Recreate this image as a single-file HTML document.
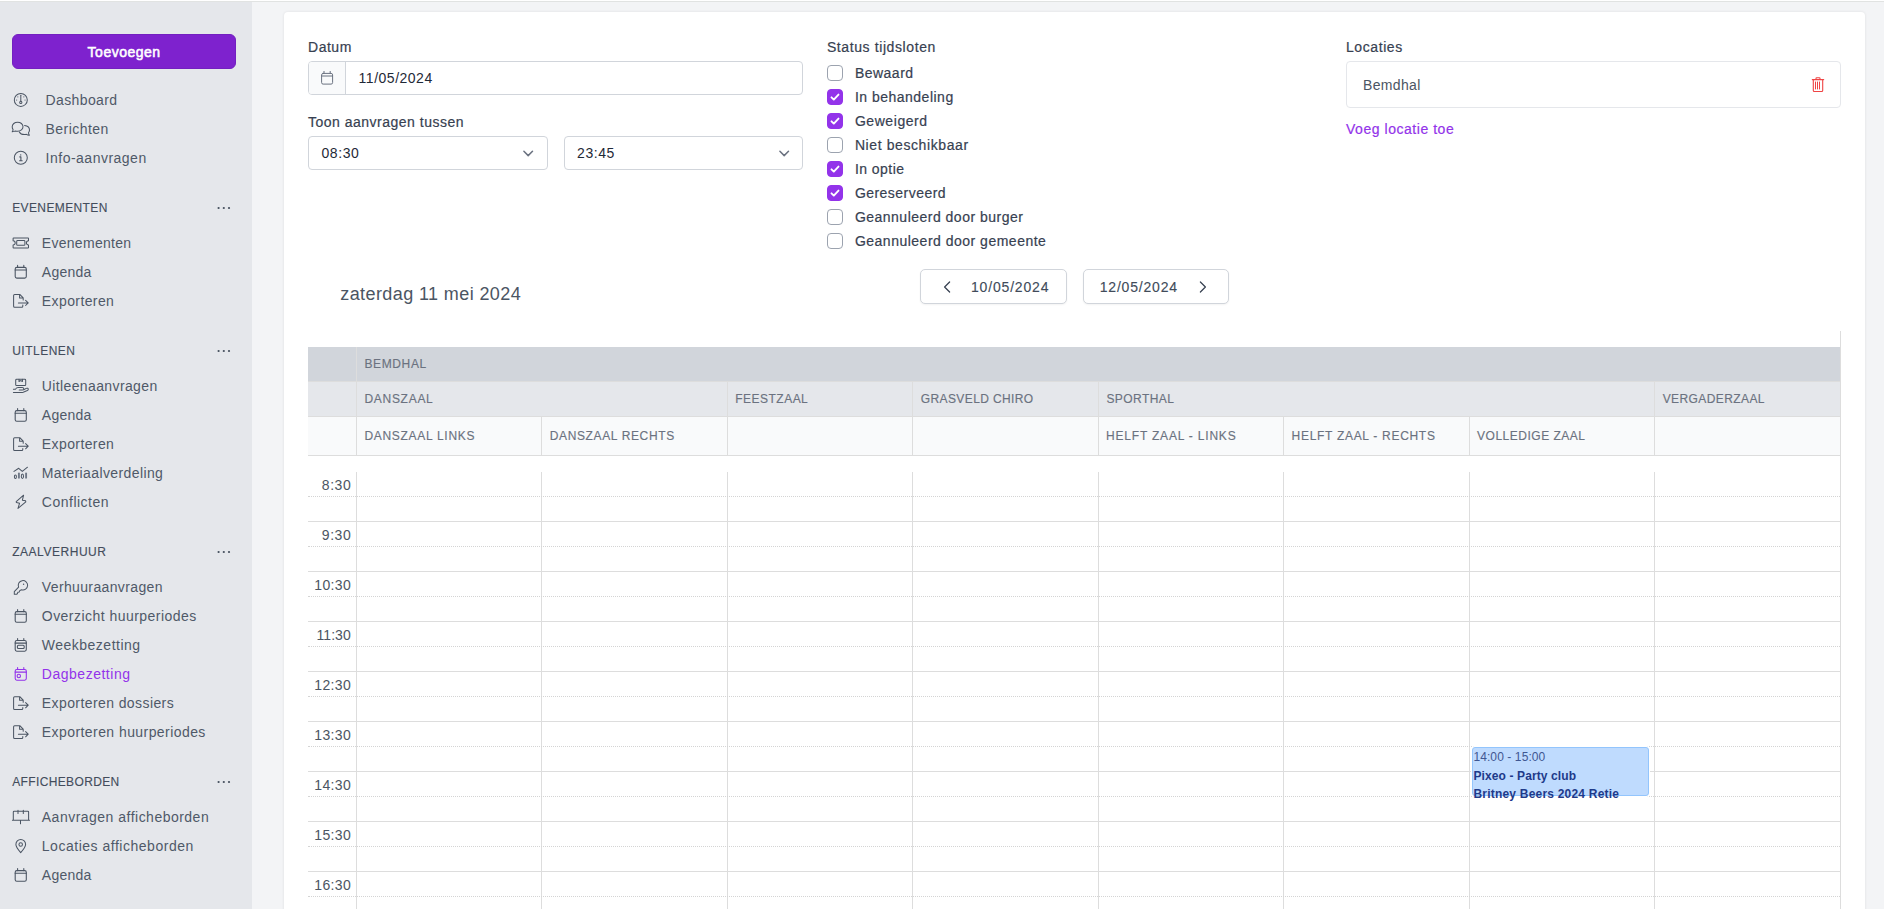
<!DOCTYPE html>
<html lang="nl">
<head>
<meta charset="utf-8">
<title>Dagbezetting</title>
<style>
*{box-sizing:border-box;margin:0;padding:0}
html,body{width:1884px;height:909px;overflow:hidden}
body{position:relative;background:#f3f4f6;font-family:"Liberation Sans",sans-serif;font-size:14px;color:#374151}
.abs,.t{position:absolute}
.t{white-space:nowrap;line-height:1;font-weight:400;text-decoration:none;display:block}
h2.t,h3.t{font-weight:400}
.med{-webkit-text-stroke:0.2px currentColor}
.hd{-webkit-text-stroke:0.12px currentColor}
.hd2{-webkit-text-stroke:0.15px currentColor}
.semi{-webkit-text-stroke:0.55px currentColor}
#topline{left:0;top:0;width:1884px;height:2px;background:#e1e3e2;border-top:1px solid #fff;z-index:5}
#sidebar{left:0;top:0;width:252px;height:909px;background:#e5e7eb}
#addbtn{left:12px;top:34px;width:224px;height:35px;border-radius:6px;background:#7e22ce;border:1px solid #7320c0;font-family:inherit;text-align:left;overflow:visible}
#card{left:284px;top:12px;width:1581px;height:920px;background:#fff;border-radius:4px;box-shadow:0 0 3px rgba(0,0,0,.09)}
.box{border:1px solid #d1d5db;border-radius:4px;background:#fff}
.cb{width:16px;height:16px;left:827px;border:1px solid #9ca3af;border-radius:4px;background:#fff}
.cb.on{background:#9333ea;border-color:#9333ea}
.navb{border:1px solid #d1d5db;border-radius:5px;background:#fff;box-shadow:0 1px 2px rgba(0,0,0,.05)}
.vl{width:1px;background:#ddd}
.hl{height:1px;background:#ddd;left:308px;width:1532px}
.dl{height:0;border-top:1px dotted #d4d4d4;left:308px;width:1532px}
svg{position:absolute;overflow:visible}
</style>
</head>
<body>
<div id="topline" class="abs"></div>
<aside id="sidebar" class="abs">
<button id="addbtn" class="abs" type="button"><span class="t semi" id="t0" style="left:74.60px;top:10.15px;font-size:14px;color:#ffffff;letter-spacing:0.498px;">Toevoegen</span></button>
<nav>
<svg id="navicons" width="252" height="909" viewBox="0 0 252 909" style="left:0;top:0"><g fill="none" stroke="#4b5563" stroke-width="1.02" stroke-linecap="round" stroke-linejoin="round"><circle cx="20.8" cy="99.90" r="6.5"/><path d="M20.8 95.30V101.30"/><circle cx="20.8" cy="102.40" r="1.1"/><path d="M16.6 100.10h.1M25 100.10h.1M17.8 96.90h.1M23.8 96.90h.1" stroke-width="1"/></g><g fill="none" stroke="#4b5563" stroke-width="1.02" stroke-linecap="round" stroke-linejoin="round" transform="translate(6,114)"><path d="M7.9 17.4c-.9.4-1.6.5-1.7.4.6-.8.9-1.6.9-2.2A4.6 4.6 0 0 1 6.2 12.7c0-2.5 2.4-4.5 5.4-4.5s5.4 2 5.4 4.5-2.4 4.5-5.4 4.5c-1.4 0-2.600-.3-3.700.2z"/><path d="M18.600 11.500c2.800.3 4.900 2.200 4.900 4.600 0 1-.4 1.900-1 2.700 0 .6.300 1.600.9 2.400-.900.100-2.100-.300-3-.900-.6.200-1.300.300-2 .300-2.300 0-4.300-1.100-5.100-2.700"/></g><g fill="none" stroke="#4b5563" stroke-width="1.02" stroke-linecap="round" stroke-linejoin="round"><circle cx="20.8" cy="157.80" r="6.5"/><path d="M19.8 156.90h1.1v3.700M19.600 160.70h2.600" stroke-width="1.1"/><circle cx="20.700" cy="154.90" r=".7" fill="#4b5563" stroke="none"/></g><g fill="none" stroke="#4b5563" stroke-width="1.02" stroke-linecap="round" stroke-linejoin="round"><path d="M13.600 237.90H28a.5.5 0 0 1 .5.5v2.400a2 2 0 0 0 0 4.200v2.400a.5.5 0 0 1-.5.5H13.600a.5.5 0 0 1-.5-.5v-2.400a2 2 0 0 0 0-4.200v-2.400a.5.5 0 0 1 .5-.5z"/><rect x="16.700" y="240.60" width="8.200" height="4.600" rx=".8"/></g><g fill="none" stroke="#4b5563" stroke-width="1.08" stroke-linecap="round" stroke-linejoin="round"><rect x="15.2" y="267.40" width="11.1" height="10.7" rx="1.6"/><path d="M15.2 270.00H26.3M17.6 267.40v-2M23.8 267.40v-2"/></g><g fill="none" stroke="#4b5563" stroke-width="1.02" stroke-linecap="round" stroke-linejoin="round"><path d="M22.800 305.10v1.100a1 1 0 0 1-1 1H14.6a1 1 0 0 1-1-1V295.40a1 1 0 0 1 1-1h5.2l3.4 3.4v2.2M19.6 294.40v3.6h3.6"/><path d="M18.4 302.90H28.2M25.6 300.30l2.6 2.6-2.6 2.6"/></g><g fill="none" stroke="#4b5563" stroke-width="1.02" stroke-linecap="round" stroke-linejoin="round"><rect x="15.700" y="379.30" width="10" height="6.300" rx=".9"/><path d="M19 379.30v2.200l1.700-.9 1.700.9v-2.200"/><path d="M13.400 389.30h2c.7-1 1.600-1.700 2.800-1.700h4c1 0 1.600.6 1.600 1.300s-.6 1.100-1.400 1.100h-3.200M23.800 389.70l2.400-1.300c1-.5 2.100 0 2.100.9 0 .5-.3.9-.9 1.200l-4.2 1.7c-.6.2-1 .3-1.6.3H13.4"/></g><g fill="none" stroke="#4b5563" stroke-width="1.08" stroke-linecap="round" stroke-linejoin="round"><rect x="15.2" y="410.60" width="11.1" height="10.7" rx="1.6"/><path d="M15.2 413.20H26.3M17.6 410.60v-2M23.8 410.60v-2"/></g><g fill="none" stroke="#4b5563" stroke-width="1.02" stroke-linecap="round" stroke-linejoin="round"><path d="M22.800 448.40v1.100a1 1 0 0 1-1 1H14.6a1 1 0 0 1-1-1V438.70a1 1 0 0 1 1-1h5.2l3.4 3.4v2.2M19.6 437.70v3.6h3.6"/><path d="M18.4 446.20H28.2M25.6 443.60l2.6 2.6-2.6 2.6"/></g><g fill="none" stroke="#4b5563" stroke-width="1.02" stroke-linecap="round" stroke-linejoin="round" transform="translate(0,-0.10)"><path d="M14 471.500l4.700-3.100 3.600 3.100 5.200-4.200"/><ellipse cx="15.400" cy="476.800" rx="1" ry="1.800"/><path d="M18.900 472.800v5.800" stroke-width="1.900" stroke-linecap="butt" stroke="#6f7887"/><ellipse cx="22.400" cy="476.400" rx="1.100" ry="2.200"/><path d="M26.100 472.800v5.800" stroke-width="1.900" stroke-linecap="butt" stroke="#6f7887"/></g><g fill="none" stroke="#4b5563" stroke-width="1.02" stroke-linecap="round" stroke-linejoin="round"><path d="M23.600 495.200l-7.400 6.400.2 1 3.200.6-1.600 5.200 7.800-6.600-.2-1-3.200-.6z"/></g><g fill="none" stroke="#4b5563" stroke-width="1.02" stroke-linecap="round" stroke-linejoin="round" transform="translate(6,572.500)"><path d="M12.600 14.600a4.700 4.700 0 1 1 3 2.700l-1.700.6-.6 1.500-1.500.4-.5 1.500-.8.500H8.300v-2.700z"/><circle cx="17.600" cy="11.700" r=".7" fill="#4b5563" stroke="none"/></g><g fill="none" stroke="#4b5563" stroke-width="1.08" stroke-linecap="round" stroke-linejoin="round"><rect x="15.2" y="611.60" width="11.1" height="10.7" rx="1.6"/><path d="M15.2 614.20H26.3M17.6 611.60v-2M23.8 611.60v-2"/></g><g fill="none" stroke="#4b5563" stroke-width="1.08" stroke-linecap="round" stroke-linejoin="round"><rect x="15.2" y="640.50" width="11.1" height="10.7" rx="1.6"/><path d="M15.2 643.10H26.3M17.6 640.50v-2M23.8 640.50v-2"/><rect x="17.4" y="645.30" width="6.8" height="3.2" rx="1"/></g><g fill="none" stroke="#9333ea" stroke-width="1.08" stroke-linecap="round" stroke-linejoin="round"><rect x="15.2" y="669.50" width="11.1" height="10.7" rx="1.6"/><path d="M15.2 672.10H26.3M17.6 669.50v-2M23.8 669.50v-2"/><circle cx="18.8" cy="676.00" r="1.7"/></g><g fill="none" stroke="#4b5563" stroke-width="1.02" stroke-linecap="round" stroke-linejoin="round"><path d="M22.800 707.40v1.100a1 1 0 0 1-1 1H14.6a1 1 0 0 1-1-1V697.70a1 1 0 0 1 1-1h5.2l3.4 3.4v2.2M19.6 696.70v3.6h3.6"/><path d="M18.4 705.20H28.2M25.6 702.60l2.6 2.6-2.6 2.6"/></g><g fill="none" stroke="#4b5563" stroke-width="1.02" stroke-linecap="round" stroke-linejoin="round"><path d="M22.800 736.40v1.100a1 1 0 0 1-1 1H14.6a1 1 0 0 1-1-1V726.70a1 1 0 0 1 1-1h5.2l3.4 3.4v2.2M19.6 725.70v3.6h3.6"/><path d="M18.4 734.20H28.2M25.6 731.60l2.6 2.6-2.6 2.6"/></g><g fill="none" stroke="#4b5563" stroke-width="1.02" stroke-linecap="round" stroke-linejoin="round"><path d="M13.300 820.200V812a.8.8 0 0 1 .8-.8H27.800a.8.8 0 0 1 .8.8v8.200M12.400 820.200H29.500M20.500 820.200v3.500M18 810.200v3.300M23.300 810.200v3.300"/></g><g fill="none" stroke="#4b5563" stroke-width="1.02" stroke-linecap="round" stroke-linejoin="round" transform="translate(6,831)"><path d="M14.700 21.600c-3-3.600-4.800-5.700-4.800-8.200a4.850 4.850 0 0 1 9.700 0c0 2.500-1.800 4.600-4.900 8.200z"/><circle cx="14.700" cy="13.400" r="1.750"/></g><g fill="none" stroke="#4b5563" stroke-width="1.08" stroke-linecap="round" stroke-linejoin="round"><rect x="15.2" y="870.60" width="11.1" height="10.7" rx="1.6"/><path d="M15.2 873.20H26.3M17.6 870.60v-2M23.8 870.60v-2"/></g></svg>
<svg width="14" height="4" viewBox="0 0 14 4" style="left:217.000px;top:205.9px"><circle cx="1.600" cy="2" r="1.100" fill="#434d5c"/><circle cx="6.800" cy="2" r="1.100" fill="#434d5c"/><circle cx="12" cy="2" r="1.100" fill="#434d5c"/></svg><svg width="14" height="4" viewBox="0 0 14 4" style="left:217.000px;top:348.9px"><circle cx="1.600" cy="2" r="1.100" fill="#434d5c"/><circle cx="6.800" cy="2" r="1.100" fill="#434d5c"/><circle cx="12" cy="2" r="1.100" fill="#434d5c"/></svg><svg width="14" height="4" viewBox="0 0 14 4" style="left:217.000px;top:549.7px"><circle cx="1.600" cy="2" r="1.100" fill="#434d5c"/><circle cx="6.800" cy="2" r="1.100" fill="#434d5c"/><circle cx="12" cy="2" r="1.100" fill="#434d5c"/></svg><svg width="14" height="4" viewBox="0 0 14 4" style="left:217.000px;top:779.7px"><circle cx="1.600" cy="2" r="1.100" fill="#434d5c"/><circle cx="6.800" cy="2" r="1.100" fill="#434d5c"/><circle cx="12" cy="2" r="1.100" fill="#434d5c"/></svg>
<a class="t" id="t1" style="left:45.60px;top:92.90px;font-size:14px;color:#4f5968;letter-spacing:0.375px;">Dashboard</a>
<a class="t" id="t2" style="left:45.60px;top:121.90px;font-size:14px;color:#4f5968;letter-spacing:0.443px;">Berichten</a>
<a class="t" id="t3" style="left:45.60px;top:150.90px;font-size:14px;color:#4f5968;letter-spacing:0.493px;">Info-aanvragen</a>
<h3 class="t hd" id="t4" style="left:12.20px;top:202.04px;font-size:12px;color:#434d5c;letter-spacing:0.384px;">EVENEMENTEN</h3>
<a class="t" id="t5" style="left:41.80px;top:235.75px;font-size:14px;color:#4f5968;letter-spacing:0.289px;">Evenementen</a>
<a class="t" id="t6" style="left:41.80px;top:264.75px;font-size:14px;color:#4f5968;letter-spacing:0.264px;">Agenda</a>
<a class="t" id="t7" style="left:41.80px;top:293.65px;font-size:14px;color:#4f5968;letter-spacing:0.402px;">Exporteren</a>
<h3 class="t hd" id="t8" style="left:12.20px;top:345.04px;font-size:12px;color:#434d5c;letter-spacing:0.494px;">UITLENEN</h3>
<a class="t" id="t9" style="left:41.80px;top:378.95px;font-size:14px;color:#4f5968;letter-spacing:0.377px;">Uitleenaanvragen</a>
<a class="t" id="t10" style="left:41.80px;top:407.95px;font-size:14px;color:#4f5968;letter-spacing:0.264px;">Agenda</a>
<a class="t" id="t11" style="left:41.80px;top:436.95px;font-size:14px;color:#4f5968;letter-spacing:0.402px;">Exporteren</a>
<a class="t" id="t12" style="left:41.80px;top:465.95px;font-size:14px;color:#4f5968;letter-spacing:0.394px;">Materiaalverdeling</a>
<a class="t" id="t13" style="left:41.80px;top:494.95px;font-size:14px;color:#4f5968;letter-spacing:0.504px;">Conflicten</a>
<h3 class="t hd" id="t14" style="left:12.20px;top:545.94px;font-size:12px;color:#434d5c;letter-spacing:0.533px;">ZAALVERHUUR</h3>
<a class="t" id="t15" style="left:41.80px;top:579.85px;font-size:14px;color:#4f5968;letter-spacing:0.366px;">Verhuuraanvragen</a>
<a class="t" id="t16" style="left:41.80px;top:608.95px;font-size:14px;color:#4f5968;letter-spacing:0.464px;">Overzicht huurperiodes</a>
<a class="t" id="t17" style="left:41.80px;top:637.85px;font-size:14px;color:#4f5968;letter-spacing:0.495px;">Weekbezetting</a>
<a class="t" id="t18" style="left:41.80px;top:666.85px;font-size:14px;color:#9333ea;letter-spacing:0.517px;">Dagbezetting</a>
<a class="t" id="t19" style="left:41.80px;top:695.95px;font-size:14px;color:#4f5968;letter-spacing:0.410px;">Exporteren dossiers</a>
<a class="t" id="t20" style="left:41.80px;top:724.95px;font-size:14px;color:#4f5968;letter-spacing:0.431px;">Exporteren huurperiodes</a>
<h3 class="t hd" id="t21" style="left:12.20px;top:775.94px;font-size:12px;color:#434d5c;letter-spacing:0.368px;">AFFICHEBORDEN</h3>
<a class="t" id="t22" style="left:41.80px;top:809.75px;font-size:14px;color:#4f5968;letter-spacing:0.486px;">Aanvragen afficheborden</a>
<a class="t" id="t23" style="left:41.80px;top:838.75px;font-size:14px;color:#4f5968;letter-spacing:0.518px;">Locaties afficheborden</a>
<a class="t" id="t24" style="left:41.80px;top:867.95px;font-size:14px;color:#4f5968;letter-spacing:0.264px;">Agenda</a>
</nav>
</aside>
<main>
<div id="card" class="abs"></div>
<section id="filters">
<div class="abs box" style="left:308px;top:61px;width:495px;height:34px"></div>
<div class="abs" style="left:309px;top:62px;width:37px;height:32px;background:#f9fafb;border-right:1px solid #d1d5db;border-radius:3px 0 0 3px"></div>
<svg width="16" height="16" viewBox="0 0 16 16" style="left:319px;top:70px"><g fill="none" stroke="#6b7280" stroke-width="1" stroke-linecap="round" stroke-linejoin="round"><rect x="2.600" y="3.400" width="11" height="10.700" rx="1.500"/><path d="M2.600 6H13.600M5 3.400v-2M11.200 3.400v-2"/></g></svg>
<div class="abs box" style="left:308px;top:136px;width:240px;height:34px"></div>
<div class="abs box" style="left:564px;top:136px;width:239px;height:34px"></div>
<svg width="12" height="8" viewBox="0 0 12 8" style="left:523.2px;top:150px"><path d="M0.9 1.3l4.3 4.3 4.3-4.3" fill="none" stroke="#6b7280" stroke-width="1.5" stroke-linecap="round" stroke-linejoin="round"/></svg>
<svg width="12" height="8" viewBox="0 0 12 8" style="left:778.5px;top:150px"><path d="M0.9 1.3l4.3 4.3 4.3-4.3" fill="none" stroke="#6b7280" stroke-width="1.5" stroke-linecap="round" stroke-linejoin="round"/></svg>
<div class="abs cb" style="top:65px"></div>
<div class="abs cb on" style="top:89px"><svg width="16" height="16" viewBox="0 0 16 16" style="left:-1px;top:-1px"><path d="M4.500 8.300l2.300 2.300 4.700-5" fill="none" stroke="#fff" stroke-width="1.900" stroke-linecap="round" stroke-linejoin="round"/></svg></div>
<div class="abs cb on" style="top:113px"><svg width="16" height="16" viewBox="0 0 16 16" style="left:-1px;top:-1px"><path d="M4.500 8.300l2.300 2.300 4.700-5" fill="none" stroke="#fff" stroke-width="1.900" stroke-linecap="round" stroke-linejoin="round"/></svg></div>
<div class="abs cb" style="top:137px"></div>
<div class="abs cb on" style="top:161px"><svg width="16" height="16" viewBox="0 0 16 16" style="left:-1px;top:-1px"><path d="M4.500 8.300l2.300 2.300 4.700-5" fill="none" stroke="#fff" stroke-width="1.900" stroke-linecap="round" stroke-linejoin="round"/></svg></div>
<div class="abs cb on" style="top:185px"><svg width="16" height="16" viewBox="0 0 16 16" style="left:-1px;top:-1px"><path d="M4.500 8.300l2.300 2.300 4.700-5" fill="none" stroke="#fff" stroke-width="1.900" stroke-linecap="round" stroke-linejoin="round"/></svg></div>
<div class="abs cb" style="top:209px"></div>
<div class="abs cb" style="top:233px"></div>
<div class="abs" style="left:1346px;top:61px;width:495px;height:47px;border:1px solid #e5e7eb;border-radius:4px;background:#fff"></div>
<svg width="14" height="16" viewBox="0 0 14 16" style="left:1811px;top:77px"><g fill="none" stroke="#ef4444" stroke-width="1.100" stroke-linecap="round" stroke-linejoin="round"><path d="M1.300 2.600H12.700M5 2.600V1.500a.7.700 0 0 1 .7-.7H8.300a.7.700 0 0 1 .7.700V2.600M2.300 2.600V13.500a1 1 0 0 0 1 1H10.700a1 1 0 0 0 1-1V2.600"/><path d="M4.500 5v7M6.500 5v7M8.500 5v7" stroke-width="1"/></g></svg>
<div class="abs navb" style="left:920px;top:269px;width:147px;height:35px"></div>
<div class="abs navb" style="left:1083px;top:269px;width:146px;height:35px"></div>
<svg width="10" height="14" viewBox="0 0 10 14" style="left:941.500px;top:280px"><path d="M7.600 2L2.600 7l5 5" fill="none" stroke="#374151" stroke-width="1.250" stroke-linecap="round" stroke-linejoin="round"/></svg>
<svg width="10" height="14" viewBox="0 0 10 14" style="left:1198px;top:280px"><path d="M2.400 2L7.400 7l-5 5" fill="none" stroke="#374151" stroke-width="1.250" stroke-linecap="round" stroke-linejoin="round"/></svg>
<label class="t med" id="t25" style="left:308.00px;top:40.10px;font-size:14px;color:#374151;letter-spacing:0.516px;">Datum</label>
<span class="t" id="t26" style="left:358.60px;top:71.25px;font-size:14px;color:#1f2937;letter-spacing:0.508px;">11/05/2024</span>
<label class="t med" id="t27" style="left:308.00px;top:115.15px;font-size:14px;color:#374151;letter-spacing:0.497px;">Toon aanvragen tussen</label>
<span class="t" id="t28" style="left:321.40px;top:146.05px;font-size:14px;color:#1f2937;letter-spacing:0.613px;">08:30</span>
<span class="t" id="t29" style="left:577.10px;top:146.05px;font-size:14px;color:#1f2937;letter-spacing:0.563px;">23:45</span>
<label class="t med" id="t30" style="left:826.90px;top:40.10px;font-size:14px;color:#374151;letter-spacing:0.604px;">Status tijdsloten</label>
<label class="t med" id="t31" style="left:854.90px;top:66.05px;font-size:14px;color:#374151;letter-spacing:0.489px;">Bewaard</label>
<label class="t med" id="t32" style="left:854.90px;top:90.05px;font-size:14px;color:#374151;letter-spacing:0.494px;">In behandeling</label>
<label class="t med" id="t33" style="left:854.90px;top:114.05px;font-size:14px;color:#374151;letter-spacing:0.562px;">Geweigerd</label>
<label class="t med" id="t34" style="left:854.90px;top:138.05px;font-size:14px;color:#374151;letter-spacing:0.595px;">Niet beschikbaar</label>
<label class="t med" id="t35" style="left:854.90px;top:162.05px;font-size:14px;color:#374151;letter-spacing:0.452px;">In optie</label>
<label class="t med" id="t36" style="left:854.90px;top:186.05px;font-size:14px;color:#374151;letter-spacing:0.464px;">Gereserveerd</label>
<label class="t med" id="t37" style="left:854.90px;top:210.05px;font-size:14px;color:#374151;letter-spacing:0.489px;">Geannuleerd door burger</label>
<label class="t med" id="t38" style="left:854.90px;top:234.05px;font-size:14px;color:#374151;letter-spacing:0.499px;">Geannuleerd door gemeente</label>
<label class="t med" id="t39" style="left:1346.00px;top:40.10px;font-size:14px;color:#374151;letter-spacing:0.578px;">Locaties</label>
<span class="t" id="t40" style="left:1363.00px;top:78.25px;font-size:14px;color:#4b5563;letter-spacing:0.339px;">Bemdhal</span>
<a class="t med" id="t41" style="left:1346.00px;top:122.15px;font-size:14px;color:#9333ea;letter-spacing:0.537px;">Voeg locatie toe</a>
</section>
<section id="calendar">
<div class="abs" style="left:308px;top:347px;width:1532px;height:34px;background:#d1d5db"></div>
<div class="abs" style="left:308px;top:382px;width:1532px;height:34px;background:#e5e7eb"></div>
<div class="abs" style="left:308px;top:416px;width:1532px;height:39px;background:#f9fafb"></div>
<div class="abs hl" style="top:381px"></div>
<div class="abs hl" style="top:416px"></div>
<div class="abs hl" style="top:455px"></div>
<div class="abs vl" style="left:356px;top:347px;height:108px"></div>
<div class="abs vl" style="left:727px;top:382px;height:73px"></div>
<div class="abs vl" style="left:912px;top:382px;height:73px"></div>
<div class="abs vl" style="left:1098px;top:382px;height:73px"></div>
<div class="abs vl" style="left:1654px;top:382px;height:73px"></div>
<div class="abs vl" style="left:541px;top:416px;height:39px"></div>
<div class="abs vl" style="left:1283px;top:416px;height:39px"></div>
<div class="abs vl" style="left:1469px;top:416px;height:39px"></div>
<div class="abs vl" style="left:1840px;top:331px;height:600px"></div>
<div class="abs vl" style="left:356px;top:472px;height:450px"></div>
<div class="abs vl" style="left:541px;top:472px;height:450px"></div>
<div class="abs vl" style="left:727px;top:472px;height:450px"></div>
<div class="abs vl" style="left:912px;top:472px;height:450px"></div>
<div class="abs vl" style="left:1098px;top:472px;height:450px"></div>
<div class="abs vl" style="left:1283px;top:472px;height:450px"></div>
<div class="abs vl" style="left:1469px;top:472px;height:450px"></div>
<div class="abs vl" style="left:1654px;top:472px;height:450px"></div>
<div class="abs dl" style="top:496px"></div>
<div class="abs hl" style="top:521px"></div>
<div class="abs dl" style="top:546px"></div>
<div class="abs hl" style="top:571px"></div>
<div class="abs dl" style="top:596px"></div>
<div class="abs hl" style="top:621px"></div>
<div class="abs dl" style="top:646px"></div>
<div class="abs hl" style="top:671px"></div>
<div class="abs dl" style="top:696px"></div>
<div class="abs hl" style="top:721px"></div>
<div class="abs dl" style="top:746px"></div>
<div class="abs hl" style="top:771px"></div>
<div class="abs dl" style="top:796px"></div>
<div class="abs hl" style="top:821px"></div>
<div class="abs dl" style="top:846px"></div>
<div class="abs hl" style="top:871px"></div>
<div class="abs dl" style="top:896px"></div>
<div class="abs" style="left:1472px;top:747px;width:177px;height:49px;background:#bfdbfe;border:1px solid #93c5fd;border-radius:3px;box-shadow:0 0 0 1px #fff"></div>
<h2 class="t" id="t42" style="left:340.30px;top:284.66px;font-size:18px;color:#4b5563;letter-spacing:0.400px;">zaterdag 11 mei 2024</h2>
<span class="t hd" id="t43" style="left:971.00px;top:280.05px;font-size:14px;color:#414b5a;letter-spacing:0.825px;">10/05/2024</span>
<span class="t hd" id="t44" style="left:1099.70px;top:280.05px;font-size:14px;color:#414b5a;letter-spacing:0.814px;">12/05/2024</span>
<span class="t hd2" id="t45" style="left:364.40px;top:357.94px;font-size:12px;color:#6b7280;letter-spacing:0.631px;">BEMDHAL</span>
<span class="t hd2" id="t46" style="left:364.40px;top:392.74px;font-size:12px;color:#6b7280;letter-spacing:0.720px;">DANSZAAL</span>
<span class="t hd2" id="t47" style="left:735.30px;top:392.74px;font-size:12px;color:#6b7280;letter-spacing:0.477px;">FEESTZAAL</span>
<span class="t hd2" id="t48" style="left:920.80px;top:392.74px;font-size:12px;color:#6b7280;letter-spacing:0.388px;">GRASVELD CHIRO</span>
<span class="t hd2" id="t49" style="left:1106.40px;top:392.74px;font-size:12px;color:#6b7280;letter-spacing:0.447px;">SPORTHAL</span>
<span class="t hd2" id="t50" style="left:1662.70px;top:392.74px;font-size:12px;color:#6b7280;letter-spacing:0.404px;">VERGADERZAAL</span>
<span class="t hd2" id="t51" style="left:364.40px;top:429.94px;font-size:12px;color:#6b7280;letter-spacing:0.706px;">DANSZAAL LINKS</span>
<span class="t hd2" id="t52" style="left:549.70px;top:429.94px;font-size:12px;color:#6b7280;letter-spacing:0.637px;">DANSZAAL RECHTS</span>
<span class="t hd2" id="t53" style="left:1106.00px;top:429.94px;font-size:12px;color:#6b7280;letter-spacing:0.803px;">HELFT ZAAL - LINKS</span>
<span class="t hd2" id="t54" style="left:1291.60px;top:429.94px;font-size:12px;color:#6b7280;letter-spacing:0.701px;">HELFT ZAAL - RECHTS</span>
<span class="t hd2" id="t55" style="left:1477.10px;top:429.94px;font-size:12px;color:#6b7280;letter-spacing:0.502px;">VOLLEDIGE ZAAL</span>
<time class="t" id="t56" style="left:321.80px;top:477.95px;font-size:14px;color:#4b5563;letter-spacing:0.550px;">8:30</time>
<time class="t" id="t57" style="left:321.80px;top:527.95px;font-size:14px;color:#4b5563;letter-spacing:0.550px;">9:30</time>
<time class="t" id="t58" style="left:314.30px;top:577.95px;font-size:14px;color:#4b5563;letter-spacing:0.338px;">10:30</time>
<time class="t" id="t59" style="left:316.60px;top:627.95px;font-size:14px;color:#4b5563;letter-spacing:0.025px;">11:30</time>
<time class="t" id="t60" style="left:314.30px;top:677.95px;font-size:14px;color:#4b5563;letter-spacing:0.338px;">12:30</time>
<time class="t" id="t61" style="left:314.30px;top:727.95px;font-size:14px;color:#4b5563;letter-spacing:0.338px;">13:30</time>
<time class="t" id="t62" style="left:314.30px;top:777.95px;font-size:14px;color:#4b5563;letter-spacing:0.338px;">14:30</time>
<time class="t" id="t63" style="left:314.30px;top:827.95px;font-size:14px;color:#4b5563;letter-spacing:0.338px;">15:30</time>
<time class="t" id="t64" style="left:314.30px;top:877.95px;font-size:14px;color:#4b5563;letter-spacing:0.338px;">16:30</time>
<span class="t" id="t65" style="left:1473.40px;top:750.94px;font-size:12px;color:#3f5792;letter-spacing:0.097px;">14:00 - 15:00</span>
<b class="t" id="t66" style="left:1473.40px;top:770.04px;font-size:12px;color:#1e3a8a;font-weight:700;letter-spacing:0.117px;">Pixeo - Party club</b>
<b class="t" id="t67" style="left:1473.40px;top:787.94px;font-size:12px;color:#1e3a8a;font-weight:700;letter-spacing:0.211px;">Britney Beers 2024 Retie</b>
</section>
</main>

</body>
</html>
